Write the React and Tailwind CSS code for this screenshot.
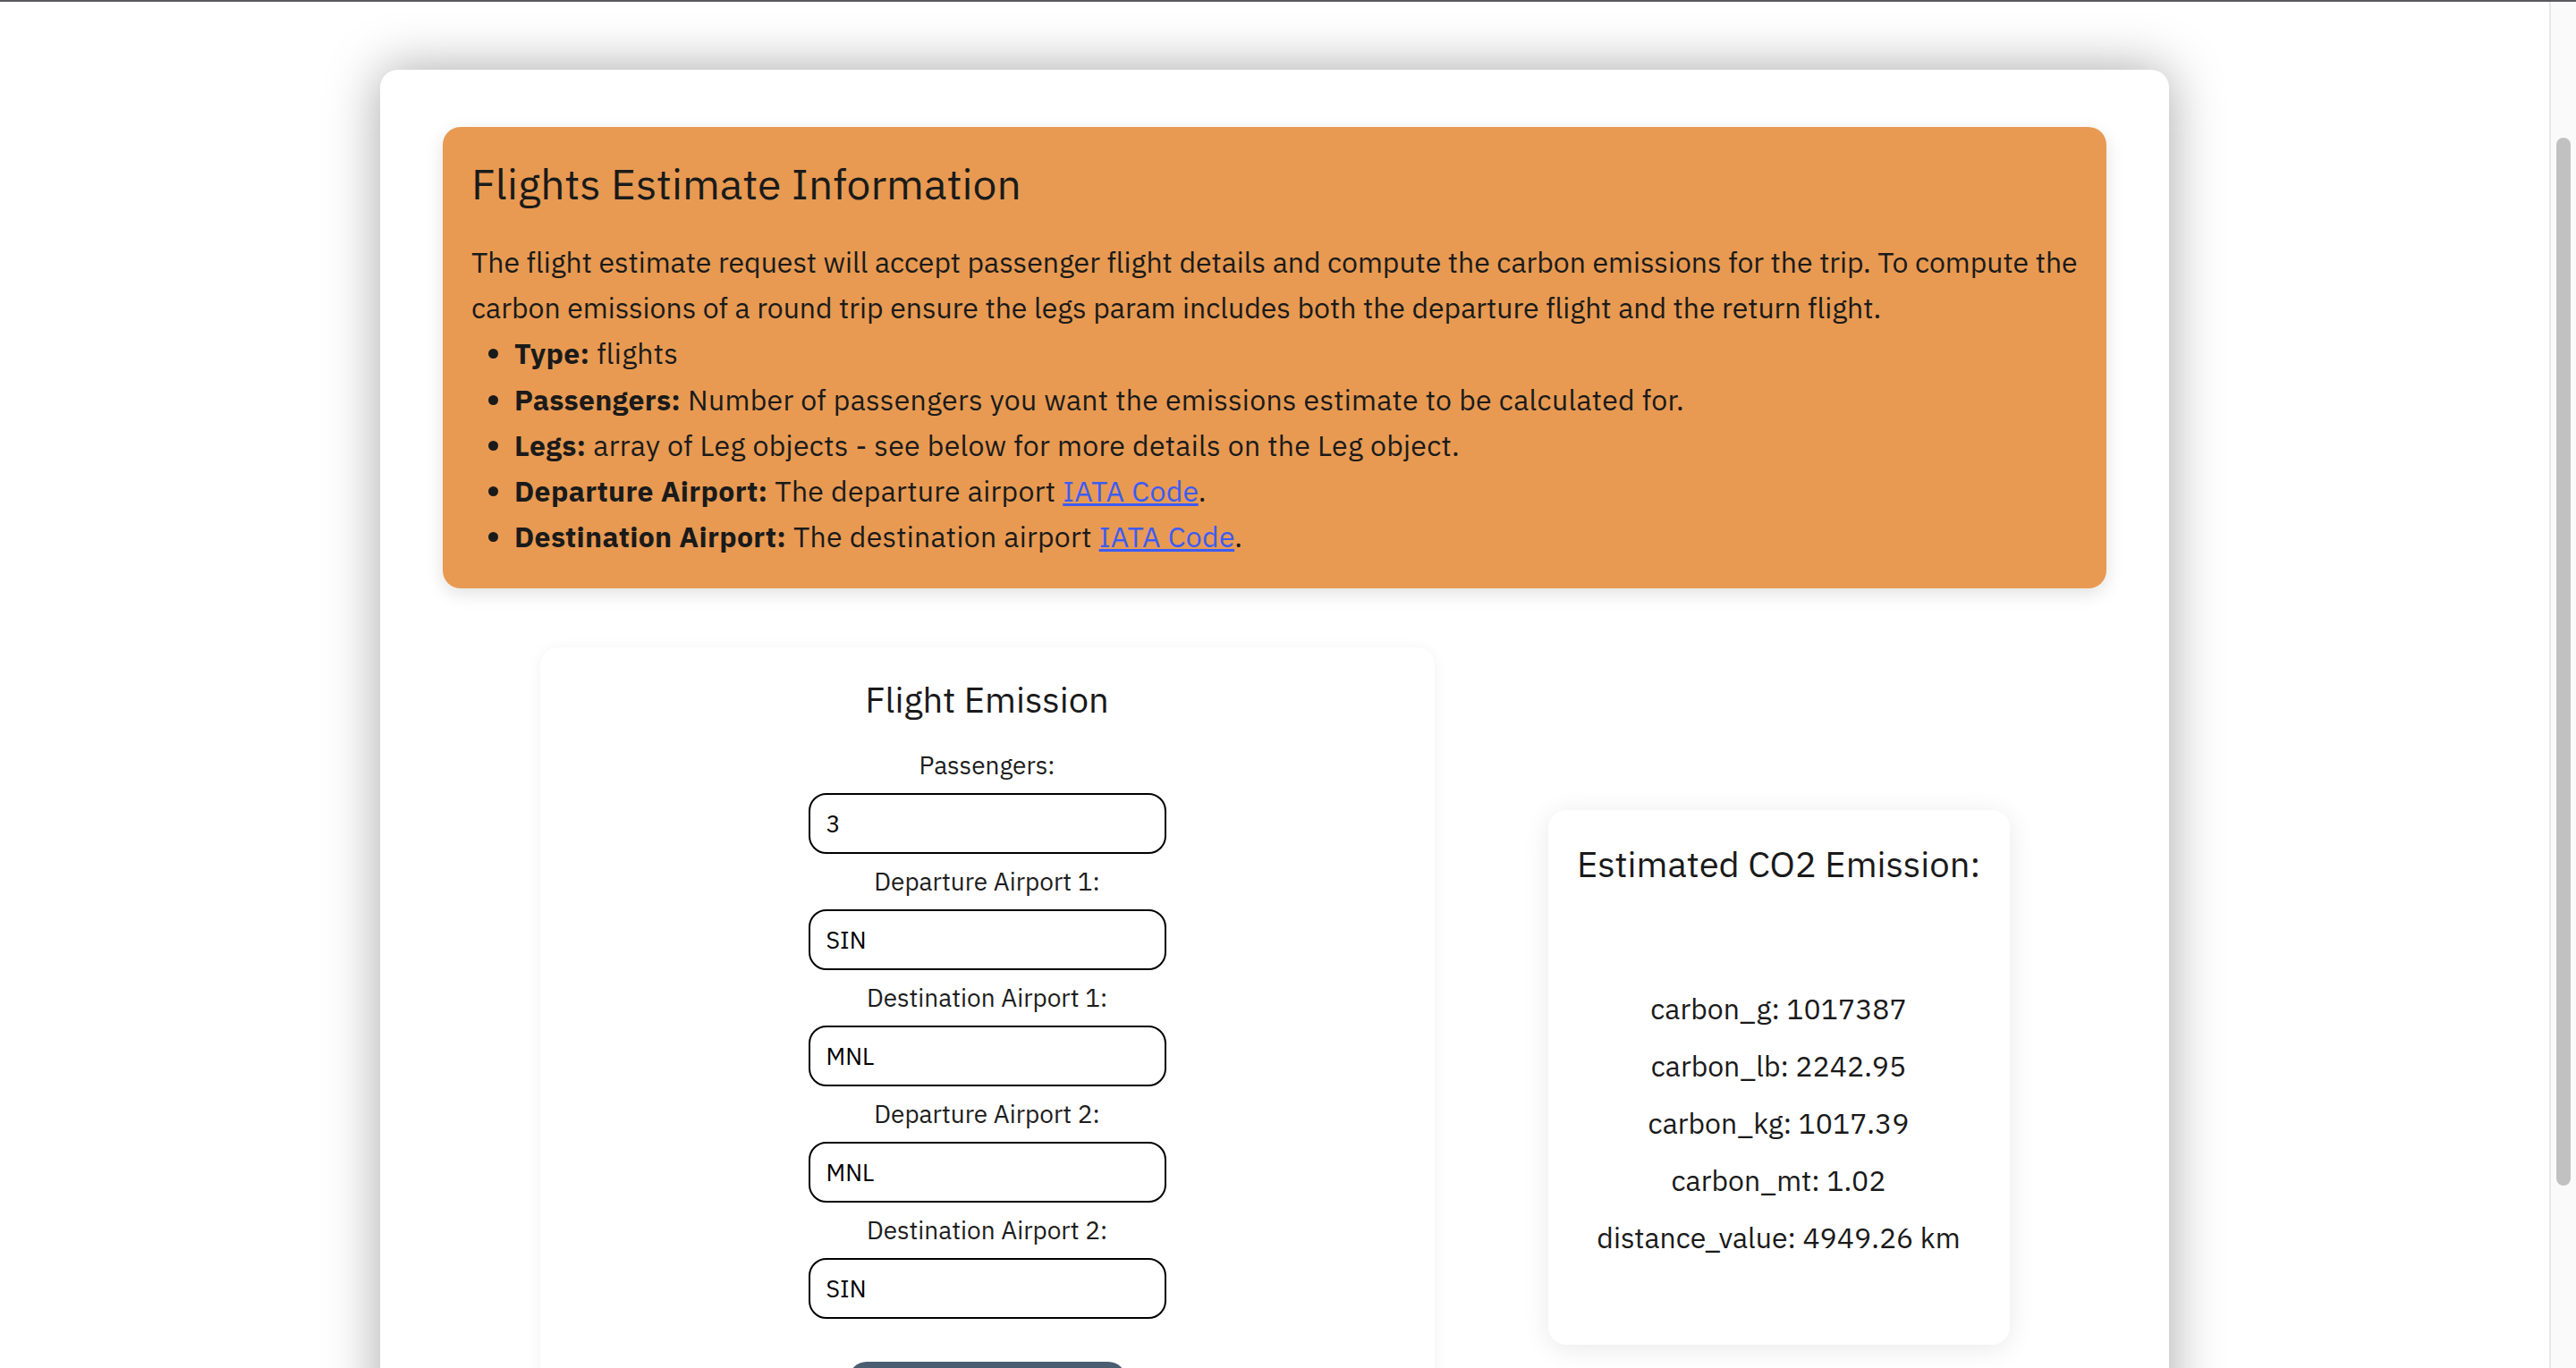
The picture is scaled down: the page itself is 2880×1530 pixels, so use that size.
import React from "react";

const font = { fontFamily: '"IBM Plex Sans", "Noto Sans", "Open Sans", sans-serif' };

function Field({ label, value }) {
  return (
    <div className="flex flex-col items-center">
      <label className="block text-[28px] leading-[44.8px] text-[#1d1d1d]">{label}</label>
      <input
        readOnly
        value={value}
        className="mt-[8px] mb-[9.2px] w-[400px] h-[68px] border-2 border-black rounded-[20px] px-[18px] text-[26.67px] text-black bg-white outline-none"
        style={font}
      />
    </div>
  );
}

export default function App() {
  return (
    <div className="h-[1530px] w-full overflow-hidden flex flex-col bg-white text-[#1a1a1a]" style={font}>
      <div className="h-[2px] shrink-0 bg-[#5b5b5f]" />
      <div className="flex flex-1 min-h-0">
        <main className="flex-1 min-w-0 overflow-hidden">
          <div className="mx-auto mt-[76px] w-[2000px] rounded-[20px] bg-white px-[70px] pt-[64px] pb-[80px] shadow-[0_0_60px_rgba(0,0,0,0.35)]">
            <section className="rounded-[20px] bg-[#e89a52] p-[32px] shadow-[0_6px_20px_rgba(0,0,0,0.12)]">
              <h2 className="text-[48px] leading-[62px] font-normal mb-[32px]">Flights Estimate Information</h2>
              <p className="text-[32px] leading-[51.2px]">
                The flight estimate request will accept passenger flight details and compute the carbon emissions for the trip. To compute the
                <br />
                carbon emissions of a round trip ensure the legs param includes both the departure flight and the return flight.
              </p>
              <ul className="list-disc pl-[48px] text-[32px] leading-[51.2px] tracking-[0.3px]">
                <li><b className="font-bold">Type:</b> flights</li>
                <li><b className="font-bold">Passengers:</b> Number of passengers you want the emissions estimate to be calculated for.</li>
                <li><b className="font-bold">Legs:</b> array of Leg objects - see below for more details on the Leg object.</li>
                <li>
                  <b className="font-bold">Departure Airport:</b> The departure airport{" "}
                  <a href="#" className="text-[#3b5cf6] underline">IATA Code</a>.
                </li>
                <li>
                  <b className="font-bold">Destination Airport:</b> The destination airport{" "}
                  <a href="#" className="text-[#3b5cf6] underline">IATA Code</a>.
                </li>
              </ul>
            </section>

            <div className="mt-[66px] flex items-center justify-center gap-[127px]">
              <div className="w-[1000px] rounded-[20px] bg-white pt-[32px] pb-[83px] flex flex-col items-center shadow-[0_2px_16px_rgba(0,0,0,0.06)]">
                <h3 className="text-[40px] leading-[52px] font-normal mb-[26px]">Flight Emission</h3>
                <Field label="Passengers:" value="3" />
                <Field label="Departure Airport 1:" value="SIN" />
                <Field label="Destination Airport 1:" value="MNL" />
                <Field label="Departure Airport 2:" value="MNL" />
                <Field label="Destination Airport 2:" value="SIN" />
                <button className="mt-[39px] w-[310px] h-[80px] rounded-[20px] bg-[#4a5d71] text-white text-[28px]">
                  Calculate
                </button>
              </div>

              <div className="w-[516px] h-[598px] rounded-[20px] bg-white pt-[34px] flex flex-col items-center shadow-[0_4px_30px_rgba(0,0,0,0.09)]">
                <h3 className="text-[40px] leading-[52px] font-normal mb-[111px]">Estimated CO2 Emission:</h3>
                <div className="flex flex-col items-center gap-[12.8px] text-[32px] leading-[51.2px]">
                  <p>carbon_g: 1017387</p>
                  <p>carbon_lb: 2242.95</p>
                  <p>carbon_kg: 1017.39</p>
                  <p>carbon_mt: 1.02</p>
                  <p>distance_value: 4949.26 km</p>
                </div>
              </div>
            </div>
          </div>
        </main>
        <div className="w-[30px] shrink-0 border-l-2 border-[#e8e8e8] bg-[#fafafa] flex justify-center">
          <div className="mt-[152px] h-[1172px] w-[16px] rounded-full bg-[#c1c1c1]" />
        </div>
      </div>
    </div>
  );
}
